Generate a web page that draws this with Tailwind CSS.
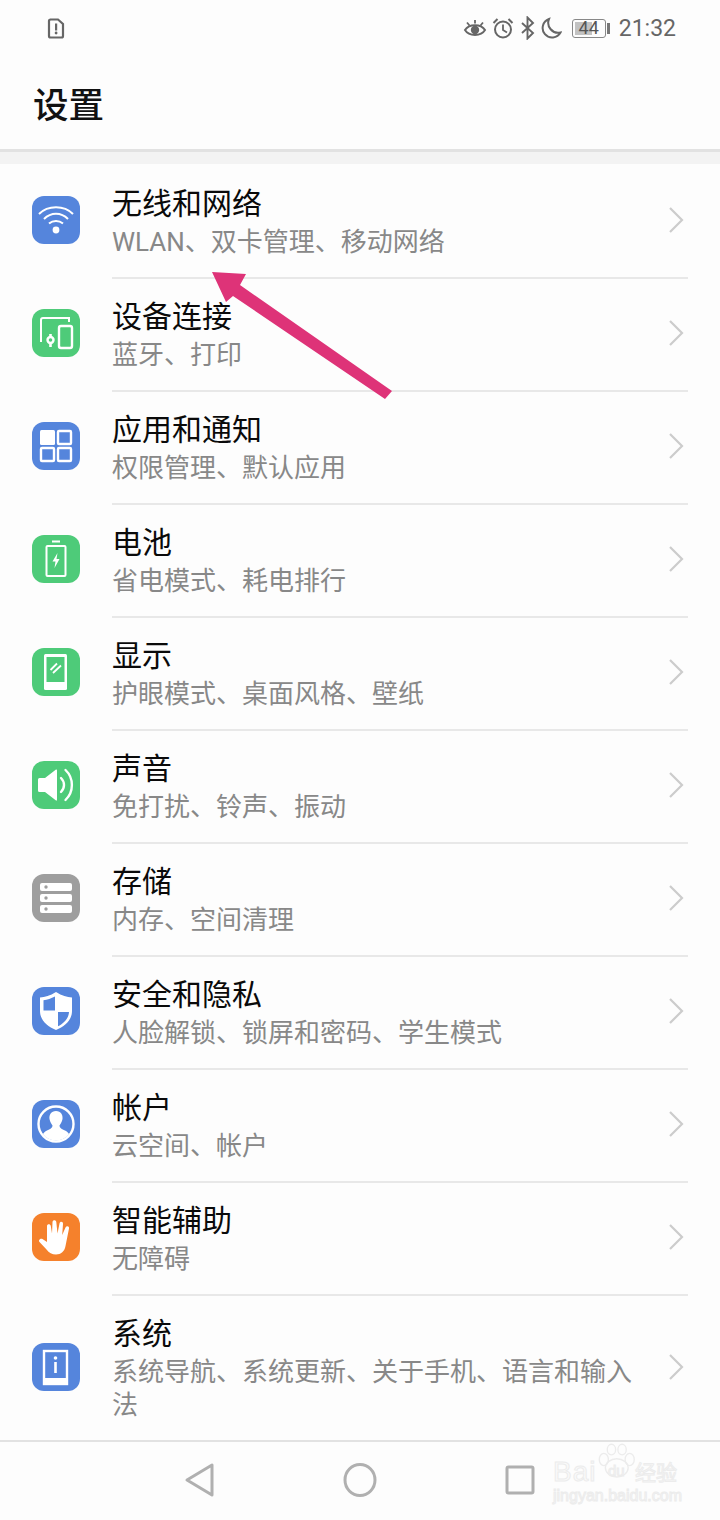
<!DOCTYPE html>
<html lang="zh-CN">
<head>
<meta charset="utf-8">
<script src="https://cdn.jsdelivr.net/npm/@tailwindcss/browser@4"></script>
<title>设置</title>
</head>
<body class="m-0 bg-[#fdfdfd]">
<div class="relative w-[720px] h-[1520px] overflow-hidden bg-[#fdfdfd] font-['Roboto','Noto_Sans_CJK_SC',sans-serif]">

  <!-- status bar -->
  <div class="flex items-center h-[56px] pl-[47px] pr-[44px]">
    <svg class="w-[18px] h-[22px]" viewBox="0 0 18 22"><path d="M3 2.500H11L16 7V19a1.500 1.500 0 0 1-1.500 1.500H3.500A1.500 1.500 0 0 1 2 19V4A1.500 1.500 0 0 1 3.500 2.500Z" fill="none" stroke="#666" stroke-width="2.200"/><rect x="8" y="6.500" width="2.200" height="7" fill="#666"/><circle cx="9.100" cy="16" r="1.400" fill="#666"/></svg>
    <div class="flex-1"></div>
    <svg class="w-[24px] h-[22px]" viewBox="0 0 24 22"><path d="M2 13C6 6.500 18 6.500 22 13 18 19.500 6 19.500 2 13Z" fill="none" stroke="#666" stroke-width="2"/><circle cx="12" cy="13" r="4.200" fill="#666"/><path d="M4 5.500 6.500 8.500M20 5.500 17.500 8.500M12 3V6.500" stroke="#666" stroke-width="1.800" fill="none"/></svg>
    <svg class="ml-[5px] w-[22px] h-[22px]" viewBox="0 0 22 22"><circle cx="11" cy="12.500" r="8" fill="none" stroke="#666" stroke-width="2"/><path d="M11 7.500V13L15 15.500" fill="none" stroke="#666" stroke-width="1.800"/><path d="M1.500 6 5.500 2M20.500 6 16.500 2" stroke="#666" stroke-width="2"/></svg>
    <svg class="ml-[7px] w-[14px] h-[24px]" viewBox="0 0 14 24"><path d="M1 7 12 17 6.500 22.500V1.500L12 7 1 17" fill="none" stroke="#666" stroke-width="1.900"/></svg>
    <svg class="ml-[5px] w-[22px] h-[22px]" viewBox="0 0 22 22"><path d="M9 2A9.500 9.500 0 1 0 20.500 15.500 10 10 0 0 1 9 2Z" fill="none" stroke="#666" stroke-width="2"/></svg>
    <div class="relative ml-[10px] w-[34px] h-[19px] rounded-[3px] border border-[#888] overflow-hidden flex items-center justify-center">
      <div class="absolute left-[2px] top-[2px] bottom-[2px] w-[17px] bg-[#c2c2c2]"></div>
      <span class="relative text-[18px] leading-none text-[#555]">44</span>
    </div>
    <div class="ml-[1px] w-[3px] h-[11px] bg-[#777]"></div>
    <span class="ml-[9px] text-[23px] leading-none text-[#666]">21:32</span>
  </div>

  <!-- title -->
  <div class="h-[93px] pl-[33px] pt-[28px]">
    <h1 class="text-[35.500px] leading-[44px] font-medium text-[#111]">设置</h1>
  </div>
  <div class="h-[3px] bg-[#e2e2e2]"></div>
  <div class="h-[12px] bg-[#f3f3f3]"></div>

  <!-- list -->
  <ul class="pt-[2px]">
    <li class="flex items-center pl-[32px] h-[113px]">
      <svg class="mb-[5px] w-[48px] h-[48px] shrink-0" viewBox="0 0 48 48"><rect width="48" height="48" rx="12" fill="#5585dc"/><circle cx="24" cy="34" r="3.400" fill="#fff"/><g fill="none" stroke="#fff" stroke-width="2"><path d="M7 18C16 9 32 9 41 18"/><path d="M12 23C19 16 29 16 36 23"/><path d="M17 27.500C21 24 27 24 31 27.500"/></g></svg>
      <div class="ml-[32px] w-[576px] h-full flex flex-col justify-center border-b-2 border-[#e8e8e8]">
        <p class="text-[30px] leading-[38px] text-[#0a0a0a]">无线和网络</p>
        <p class="mt-[3px] text-[26px] leading-[33px] text-[#888]">WLAN、双卡管理、移动网络</p>
      </div>
      <svg class="mb-[5px] ml-[-20px] w-[16px] h-[26px] shrink-0" viewBox="0 0 16 26"><path d="M2 1 14 13 2 25" fill="none" stroke="#ccc" stroke-width="2.200"/></svg>
    </li>
    <li class="flex items-center pl-[32px] h-[113px]">
      <svg class="mb-[5px] w-[48px] h-[48px] shrink-0" viewBox="0 0 48 48"><rect width="48" height="48" rx="12" fill="#4ecb79"/><g fill="none" stroke="#fff" stroke-width="2"><path d="M9 33V11A2 2 0 0 1 11 9H37V13"/><rect x="27" y="17" width="13" height="22" rx="2" stroke-width="2.400"/><circle cx="18.500" cy="31" r="3" stroke-width="2.400"/><path d="M18.500 25V28M18.500 34V38" stroke-width="2.600"/></g></svg>
      <div class="ml-[32px] w-[576px] h-full flex flex-col justify-center border-b-2 border-[#e8e8e8]">
        <p class="text-[30px] leading-[38px] text-[#0a0a0a]">设备连接</p>
        <p class="mt-[3px] text-[26px] leading-[33px] text-[#888]">蓝牙、打印</p>
      </div>
      <svg class="mb-[5px] ml-[-20px] w-[16px] h-[26px] shrink-0" viewBox="0 0 16 26"><path d="M2 1 14 13 2 25" fill="none" stroke="#ccc" stroke-width="2.200"/></svg>
    </li>
    <li class="flex items-center pl-[32px] h-[113px]">
      <svg class="mb-[5px] w-[48px] h-[48px] shrink-0" viewBox="0 0 48 48"><rect width="48" height="48" rx="12" fill="#5585dc"/><rect x="8" y="8" width="15" height="15" rx="1.500" fill="#fff"/><g fill="none" stroke="#fff" stroke-width="2.400"><rect x="26" y="9" width="13" height="13" rx="1"/><rect x="9" y="26" width="13" height="13" rx="1"/><rect x="26" y="26" width="13" height="13" rx="1"/></g></svg>
      <div class="ml-[32px] w-[576px] h-full flex flex-col justify-center border-b-2 border-[#e8e8e8]">
        <p class="text-[30px] leading-[38px] text-[#0a0a0a]">应用和通知</p>
        <p class="mt-[3px] text-[26px] leading-[33px] text-[#888]">权限管理、默认应用</p>
      </div>
      <svg class="mb-[5px] ml-[-20px] w-[16px] h-[26px] shrink-0" viewBox="0 0 16 26"><path d="M2 1 14 13 2 25" fill="none" stroke="#ccc" stroke-width="2.200"/></svg>
    </li>
    <li class="flex items-center pl-[32px] h-[113px]">
      <svg class="mb-[5px] w-[48px] h-[48px] shrink-0" viewBox="0 0 48 48"><rect width="48" height="48" rx="12" fill="#4ecb79"/><rect x="20" y="5.500" width="8" height="2" fill="#fff"/><rect x="14.500" y="11" width="19" height="30" rx="1" fill="none" stroke="#fff" stroke-width="2"/><path d="M25.500 18 20.500 26.500H23.500L22.500 33 27.500 24H24.500Z" fill="#fff"/></svg>
      <div class="ml-[32px] w-[576px] h-full flex flex-col justify-center border-b-2 border-[#e8e8e8]">
        <p class="text-[30px] leading-[38px] text-[#0a0a0a]">电池</p>
        <p class="mt-[3px] text-[26px] leading-[33px] text-[#888]">省电模式、耗电排行</p>
      </div>
      <svg class="mb-[5px] ml-[-20px] w-[16px] h-[26px] shrink-0" viewBox="0 0 16 26"><path d="M2 1 14 13 2 25" fill="none" stroke="#ccc" stroke-width="2.200"/></svg>
    </li>
    <li class="flex items-center pl-[32px] h-[113px]">
      <svg class="mb-[5px] w-[48px] h-[48px] shrink-0" viewBox="0 0 48 48"><rect width="48" height="48" rx="12" fill="#4ecb79"/><rect x="12" y="6" width="23" height="36" rx="1.500" fill="#fff"/><rect x="14.500" y="9" width="18" height="25" fill="#4ecb79"/><path d="M18.500 22 25 15.500M21 25 29 17.500" stroke="#fff" stroke-width="1.800" fill="none"/></svg>
      <div class="ml-[32px] w-[576px] h-full flex flex-col justify-center border-b-2 border-[#e8e8e8]">
        <p class="text-[30px] leading-[38px] text-[#0a0a0a]">显示</p>
        <p class="mt-[3px] text-[26px] leading-[33px] text-[#888]">护眼模式、桌面风格、壁纸</p>
      </div>
      <svg class="mb-[5px] ml-[-20px] w-[16px] h-[26px] shrink-0" viewBox="0 0 16 26"><path d="M2 1 14 13 2 25" fill="none" stroke="#ccc" stroke-width="2.200"/></svg>
    </li>
    <li class="flex items-center pl-[32px] h-[113px]">
      <svg class="mb-[5px] w-[48px] h-[48px] shrink-0" viewBox="0 0 48 48"><rect width="48" height="48" rx="12" fill="#4ecb79"/><path d="M6 18.500Q6 17 7.500 17H13L24 8.500Q25 8 25 9.500V38.500Q25 40 24 39.500L13 31H7.500Q6 31 6 29.500Z" fill="#fff"/><g fill="none" stroke="#fff" stroke-width="2.400" stroke-linecap="round"><path d="M29 17C33 21 33 27 29 31"/><path d="M33.500 9C42 17 42 31 33.500 39"/></g></svg>
      <div class="ml-[32px] w-[576px] h-full flex flex-col justify-center border-b-2 border-[#e8e8e8]">
        <p class="text-[30px] leading-[38px] text-[#0a0a0a]">声音</p>
        <p class="mt-[3px] text-[26px] leading-[33px] text-[#888]">免打扰、铃声、振动</p>
      </div>
      <svg class="mb-[5px] ml-[-20px] w-[16px] h-[26px] shrink-0" viewBox="0 0 16 26"><path d="M2 1 14 13 2 25" fill="none" stroke="#ccc" stroke-width="2.200"/></svg>
    </li>
    <li class="flex items-center pl-[32px] h-[113px]">
      <svg class="mb-[5px] w-[48px] h-[48px] shrink-0" viewBox="0 0 48 48"><rect width="48" height="48" rx="12" fill="#9e9e9e"/><g fill="#fff"><rect x="8" y="9" width="32" height="8" rx="2"/><rect x="8" y="20" width="32" height="8" rx="2"/><rect x="8" y="31" width="32" height="8" rx="2"/></g><g fill="#9e9e9e"><circle cx="14" cy="13" r="1.700"/><circle cx="14" cy="24" r="1.700"/><circle cx="14" cy="35" r="1.700"/></g></svg>
      <div class="ml-[32px] w-[576px] h-full flex flex-col justify-center border-b-2 border-[#e8e8e8]">
        <p class="text-[30px] leading-[38px] text-[#0a0a0a]">存储</p>
        <p class="mt-[3px] text-[26px] leading-[33px] text-[#888]">内存、空间清理</p>
      </div>
      <svg class="mb-[5px] ml-[-20px] w-[16px] h-[26px] shrink-0" viewBox="0 0 16 26"><path d="M2 1 14 13 2 25" fill="none" stroke="#ccc" stroke-width="2.200"/></svg>
    </li>
    <li class="flex items-center pl-[32px] h-[113px]">
      <svg class="mb-[5px] w-[48px] h-[48px] shrink-0" viewBox="0 0 48 48"><rect width="48" height="48" rx="12" fill="#5585dc"/><path d="M24 5C30 9 35 10 40 10.500V24C40 33 33 39.500 24 43 15 39.500 8 33 8 24V10.500C13 10 18 9 24 5Z" fill="#fff"/><path d="M23 9.500C19 11.500 15.500 12.800 11.500 13.300V23.500H23ZM26 25H37C36.500 32 31.500 36.500 26 39.300Z" fill="#5585dc"/></svg>
      <div class="ml-[32px] w-[576px] h-full flex flex-col justify-center border-b-2 border-[#e8e8e8]">
        <p class="text-[30px] leading-[38px] text-[#0a0a0a]">安全和隐私</p>
        <p class="mt-[3px] text-[26px] leading-[33px] text-[#888]">人脸解锁、锁屏和密码、学生模式</p>
      </div>
      <svg class="mb-[5px] ml-[-20px] w-[16px] h-[26px] shrink-0" viewBox="0 0 16 26"><path d="M2 1 14 13 2 25" fill="none" stroke="#ccc" stroke-width="2.200"/></svg>
    </li>
    <li class="flex items-center pl-[32px] h-[113px]">
      <svg class="mb-[5px] w-[48px] h-[48px] shrink-0" viewBox="0 0 48 48"><rect width="48" height="48" rx="12" fill="#5585dc"/><circle cx="24" cy="24" r="17.500" fill="none" stroke="#fff" stroke-width="2.400"/><path d="M24 11C29 11 31 15 30.500 19 30 22 28.500 24 27.500 25.500 27.500 28 30 29 33 30.500 35 31.500 36.500 33 37 34 34 38 29.500 40.500 24 40.500 18.500 40.500 14 38 11 34 11.500 33 13 31.500 15 30.500 18 29 20.500 28 20.500 25.500 19.500 24 18 22 17.500 19 17 15 19 11 24 11Z" fill="#fff"/></svg>
      <div class="ml-[32px] w-[576px] h-full flex flex-col justify-center border-b-2 border-[#e8e8e8]">
        <p class="text-[30px] leading-[38px] text-[#0a0a0a]">帐户</p>
        <p class="mt-[3px] text-[26px] leading-[33px] text-[#888]">云空间、帐户</p>
      </div>
      <svg class="mb-[5px] ml-[-20px] w-[16px] h-[26px] shrink-0" viewBox="0 0 16 26"><path d="M2 1 14 13 2 25" fill="none" stroke="#ccc" stroke-width="2.200"/></svg>
    </li>
    <li class="flex items-center pl-[32px] h-[113px]">
      <svg class="mb-[5px] w-[48px] h-[48px] shrink-0" viewBox="0 0 48 48"><rect width="48" height="48" rx="12" fill="#f5812c"/><path d="M15 24V13C15 10.500 18.500 10.500 18.800 13L20 20.500 20.500 9C20.700 6.500 24 6.500 24.300 9L25.500 20.500 27.500 10.500C28 8 31.300 8.500 31 11L30.200 22 33.500 14.500C34.500 12.500 37.500 13.300 37 15.500L33.500 33C32.500 38.500 29 41.500 24 41.500 20 41.500 17 40 14.500 36.500L7.500 29C6 27 8.500 24.800 10.500 26L15 29Z" fill="#fff"/></svg>
      <div class="ml-[32px] w-[576px] h-full flex flex-col justify-center border-b-2 border-[#e8e8e8]">
        <p class="text-[30px] leading-[38px] text-[#0a0a0a]">智能辅助</p>
        <p class="mt-[3px] text-[26px] leading-[33px] text-[#888]">无障碍</p>
      </div>
      <svg class="mb-[5px] ml-[-20px] w-[16px] h-[26px] shrink-0" viewBox="0 0 16 26"><path d="M2 1 14 13 2 25" fill="none" stroke="#ccc" stroke-width="2.200"/></svg>
    </li>
    <li class="flex items-center pl-[32px] h-[144px]">
      <svg class="mb-[2px] w-[48px] h-[48px] shrink-0" viewBox="0 0 48 48"><rect width="48" height="48" rx="12" fill="#5585dc"/><rect x="12" y="8" width="23" height="33" fill="none" stroke="#fff" stroke-width="2.400"/><rect x="12" y="35" width="23" height="6" fill="#fff"/><circle cx="23.500" cy="15" r="1.800" fill="#fff"/><rect x="22.200" y="19" width="2.600" height="11" fill="#fff"/></svg>
      <div class="ml-[32px] w-[576px] h-full flex flex-col justify-center">
        <p class="text-[30px] leading-[38px] text-[#0a0a0a]">系统</p>
        <p class="mt-[3px] w-[530px] text-[26px] leading-[33px] text-[#888]">系统导航、系统更新、关于手机、语言和输入法</p>
      </div>
      <svg class="mb-[2px] ml-[-20px] w-[16px] h-[26px] shrink-0" viewBox="0 0 16 26"><path d="M2 1 14 13 2 25" fill="none" stroke="#ccc" stroke-width="2.200"/></svg>
    </li>
  </ul>

  <!-- navigation bar -->
  <div class="relative flex h-[78px] border-t-2 border-[#e2e2e2]">
    <svg class="absolute left-[184px] top-[20px] w-[32px] h-[36px]" viewBox="0 0 32 36"><path d="M28 3V33L3 18Z" fill="none" stroke="#b0b0b0" stroke-width="3" stroke-linejoin="round"/></svg>
    <svg class="absolute left-[342px] top-[20px] w-[36px] h-[36px]" viewBox="0 0 36 36"><ellipse cx="18" cy="18" rx="15" ry="15.500" fill="none" stroke="#b0b0b0" stroke-width="3"/></svg>
    <svg class="absolute left-[504px] top-[22px] w-[32px] h-[32px]" viewBox="0 0 32 32"><rect x="3" y="3" width="26" height="26" rx="1.500" fill="none" stroke="#b0b0b0" stroke-width="3"/></svg>
    <!-- watermark -->
    <div class="absolute left-[553px] top-[2px] w-[140px] h-[64px] text-[#fafafa] [-webkit-text-stroke:1px_#ececec]">
      <svg class="absolute left-[44px] top-[-1px] w-[38px] h-[36px]" viewBox="0 0 50 46"><g fill="none" stroke="#ececec" stroke-width="1.800"><ellipse cx="9" cy="21" rx="6" ry="8"/><ellipse cx="19" cy="8" rx="5.500" ry="7"/><ellipse cx="33" cy="8" rx="5.500" ry="7"/><ellipse cx="43" cy="21" rx="6" ry="8"/><ellipse cx="26" cy="32" rx="15" ry="12"/></g></svg>
      <span class="absolute left-0 top-[10px] text-[28px] leading-[36px] font-['Liberation_Sans'] tracking-[1px]">Bai</span>
      <span class="absolute left-[55px] top-[18px] text-[15px] leading-[18px] font-['Liberation_Sans']">du</span>
      <span class="absolute left-[82px] top-[15px] text-[21px] leading-[28px]">经验</span>
      <span class="absolute left-0 top-[42px] text-[16px] leading-[20px] font-['Liberation_Sans'] whitespace-nowrap">jingyan.baidu.com</span>
    </div>
  </div>

  <!-- annotation arrow over the list -->
  <svg class="absolute left-0 top-0 w-[720px] h-[1520px] pointer-events-none" viewBox="0 0 720 1520"><polygon points="212,272 246,274 240,285 392,391 385,399 233,296 226,302" fill="#de3378"/></svg>
</div>
</body>
</html>
